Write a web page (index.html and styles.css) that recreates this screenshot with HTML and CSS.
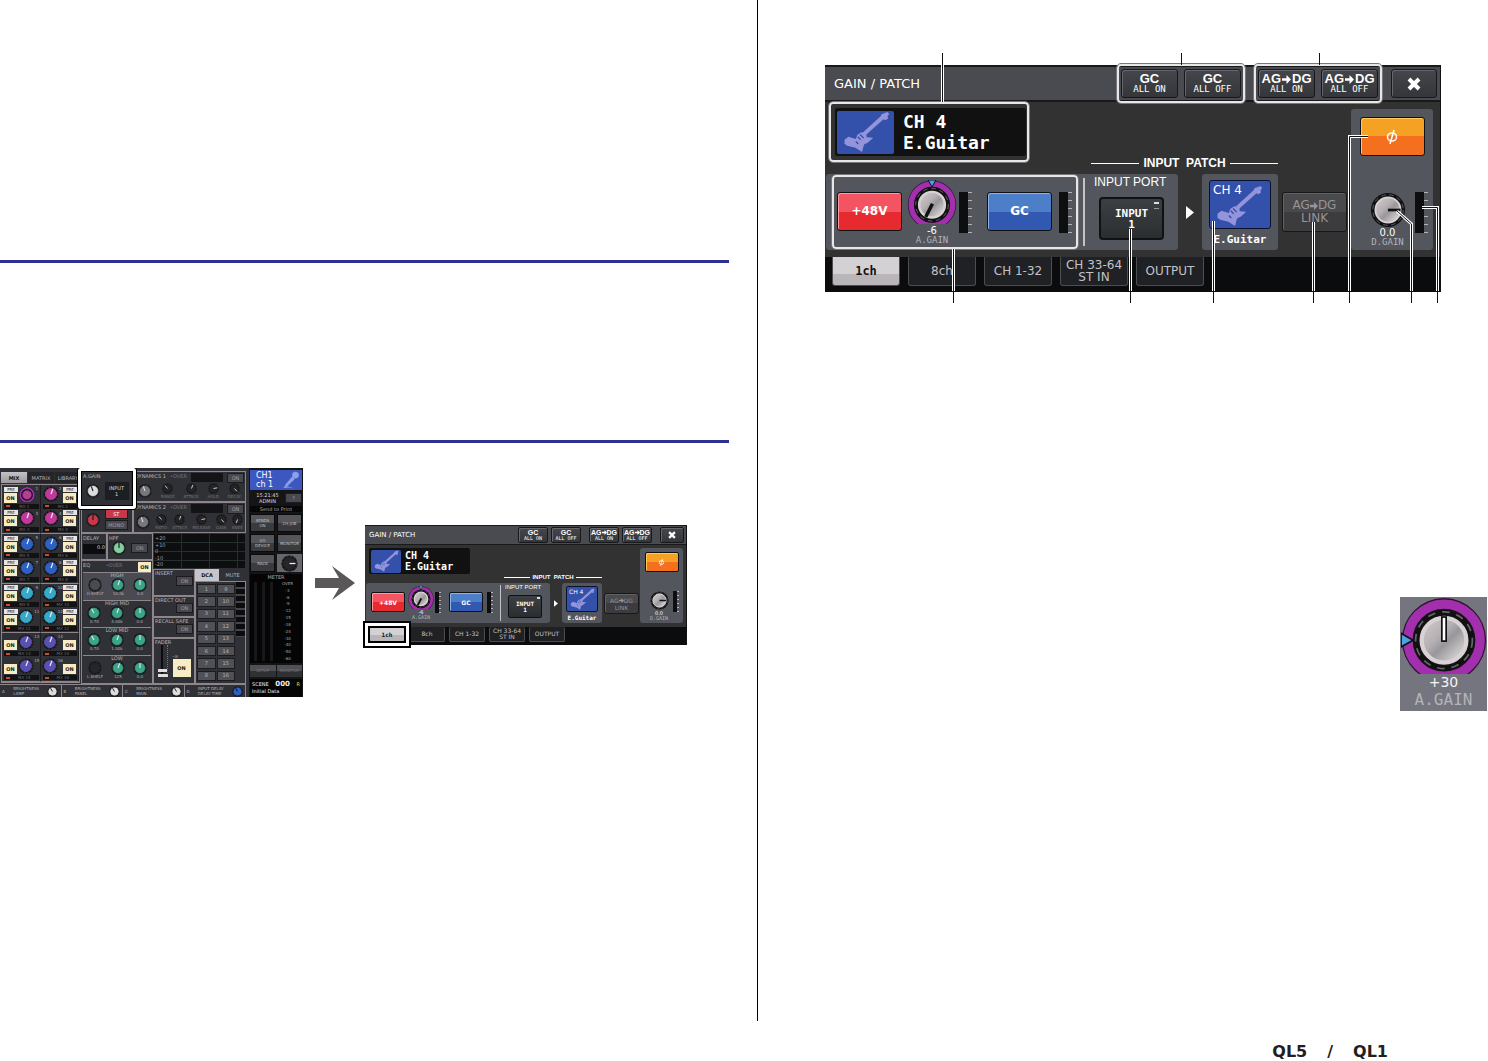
FILE: index.html
```html
<!DOCTYPE html>
<html lang="en">
<head>
  <meta charset="UTF-8">
  <meta name="viewport" content="width=device-width, initial-scale=1">
  <title>QL5/QL1 - GAIN / PATCH</title>
  <link rel="stylesheet" href="styles.css">
</head>
<body>
  <!-- shared shapes -->
  <svg class="defs" aria-hidden="true">
    <defs>
      <linearGradient id="face" x1="0" y1="0" x2="1" y2="1">
        <stop offset="0" stop-color="#d6ced1"/>
        <stop offset="0.4" stop-color="#b5afb2"/>
        <stop offset="0.55" stop-color="#98969a"/>
        <stop offset="1" stop-color="#f2eef0"/>
      </linearGradient>
      <symbol id="guitar" viewBox="0 0 171 130">
        <path d="M134 10 152 3l5 6-5 8 2 6-9 5-5-3-56 50-9-8 57-52z"/>
        <path d="M22 87l12-9 22 7 5-13 12-8 15 4 1 11 20 2-16 14-12 6-6 23-20-13-25-6-8-6z"/>
        <path class="pickup" d="M62 78l9 9M69 71l11 11M56 92l8 8" />
      </symbol>
      <symbol id="mic" viewBox="0 0 40 40">
        <circle cx="30" cy="9" r="7"/>
        <path d="M23 13l5 5L11 34l-4-3zM7 33l-3 4 12-1 8 2" />
      </symbol>
    </defs>
  </svg>

  <div class="spread">
    <section class="page page-left">
      <hr class="rule rule-first">
      <hr class="rule rule-second">
      <div class="figures">
        <div class="mixer" id="mixer"></div>
        <svg class="arrow" viewBox="0 0 40 34" aria-hidden="true"><path d="M0 12h24L17 0l23 17-23 17 7-12H0z"/></svg>
        <div class="panel mini" data-panel></div>
      </div>
    </section>

    <section class="page page-right">
      <div class="figure-main">
        <div class="panel" data-panel></div>
        <!-- leader lines over the panel -->
        <svg class="callouts" viewBox="0 0 616 250" aria-hidden="true">
          <g class="halo">
            <path d="M117.500 12v37M128.500 196v42M305.500 176v62M388.500 168v70M488.500 169v69M543 83.500h-18.500V238M572 158l14.500 13v67M597 154.500h15.500V238"/>
          </g>
          <g class="line">
            <path d="M117.500 0v49M356.500 0v12M494.500 0v12M128.500 196v54M305.500 176v74M388.500 168v82M488.500 169v81M543 83.500h-18.500V250M572 158l14.500 13v79M597 154.500h15.500V250"/>
          </g>
        </svg>
      </div>
      <div class="gain-detail" id="gainDetail"></div>
    </section>
  </div>

  <footer class="footer">
    <div class="model"><span>QL5</span><span>/</span><span>QL1</span></div>
  </footer>

  <script src="script.js"></script>
</body>
</html>
```

FILE: styles.css
```css
* { margin: 0; padding: 0; box-sizing: border-box; }
body {
  min-height: 100vh;
  display: flex;
  flex-direction: column;
  background: #fff;
  font-family: "DejaVu Sans", sans-serif;
  overflow-x: hidden;
}
button { font: inherit; color: inherit; border: none; cursor: pointer; }
svg { display: block; }
.defs { position: absolute; width: 0; height: 0; }

/* two pages side by side */
.spread {
  flex: 1;
  display: grid;
  grid-template-columns: 757fr 731fr;
}
.page-right { border-left: 1px solid #000; }
.rule {
  height: 3px;
  border: none;
  background: #2e3192;
  margin-right: 28px;
}
.rule-first { margin-top: 260px; }
.rule-second { margin-top: 177px; }
.figures {
  display: flex;
  align-items: center;
  margin-top: 25px;
}
.arrow { width: 40px; height: 34px; margin: 0 10px 0 12px; fill: #595757; flex: none; }
.footer {
  height: 40px;
  display: flex;
  justify-content: flex-end;
  align-items: flex-end;
  padding-right: 100px;
}
.model {
  display: flex;
  gap: 20px;
  font-size: 16px;
  line-height: 19px;
  font-weight: bold;
  color: #231f20;
}

/* GAIN / PATCH panel */
.figure-main {
  position: relative;
  width: 616px;
  margin: 53px 0 0 67px;
  padding: 12px 0 11px;
}
.callouts { position: absolute; inset: 0; width: 616px; height: 250px; fill: none; pointer-events: none; }
.halo { stroke: #fff; stroke-width: 3; }
.line { stroke: #111; stroke-width: 1; }
.panel {
  background: #323233;
  color: #fff;
  font-size: 12px;
  line-height: 13px;
  border-right: 1px solid #111;
}
.panel-head {
  height: 37px;
  display: flex;
  align-items: center;
  padding: 0 3px 0 9px;
  background: #4a4b50;
  border-top: 2px solid #18191b;
  border-bottom: 2px solid #18191b;
}
.panel-head h2 { font-size: 13px; font-weight: normal; flex: 1; }
.pair {
  display: flex;
  gap: 6px;
  padding: 3px 2px;
  margin-right: 9px;
}
.framed { border: 2px solid #e8e6e6; outline: 1px solid #77777b; border-radius: 4px; }
.key {
  width: 57px;
  height: 29px;
  display: flex;
  flex-direction: column;
  align-items: center;
  justify-content: center;
  border: 1px solid #17181a;
  border-radius: 3px;
  background: linear-gradient(#45464b, #35363a);
  box-shadow: inset 1px 1px 0 #66676c;
}
.key b {
  display: flex;
  align-items: center;
  gap: 1px;
  font: bold 13px/12px "Liberation Sans", sans-serif;
}
.key small { font: 9px/9px "DejaVu Sans Mono", monospace; }
.key .to { width: 9px; height: 9px; fill: currentColor; }
.key.close { width: 46px; }
.close svg { width: 14px; height: 14px; stroke: #fff; stroke-width: 4; }

.panel-body {
  display: flex;
  padding: 0 7px 7px 1px;
}
.channel-area { flex: 1; }
.name-row {
  height: 72px;
  display: flex;
  align-items: flex-start;
  justify-content: space-between;
  padding: 0 73px 0 3px;
}
.name-frame { padding: 4px 1px 4px 4px; }
.name-box {
  width: 191px;
  height: 48px;
  display: flex;
  align-items: center;
  gap: 9px;
  padding: 0 2px;
  background: #111;
  border-radius: 2px;
  font: bold 18px/21px "DejaVu Sans Mono", monospace;
}
.icon-box { width: 57px; height: 43px; background: #3350ab; border-radius: 2px; }
.icon-box svg { width: 57px; height: 43px; }
.guitar { fill: #9494dc; }
.pickup { stroke: #3350ab; stroke-width: 4; fill: none; }
.patch-title {
  width: 187px;
  align-self: flex-end;
  display: flex;
  align-items: center;
  gap: 4px;
  margin-bottom: 4px;
  font: bold 12px/13px "Liberation Sans", sans-serif;
  white-space: pre;
}
.patch-title::before, .patch-title::after { content: ""; flex: 1; height: 1px; background: #fff; }

.strip-row { height: 76px; display: flex; align-items: flex-start; }
.strip {
  width: 352px;
  height: 76px;
  display: flex;
  align-items: center;
  padding-left: 6px;
  background: #53565d;
  border-radius: 3px;
}
.gain-group {
  width: 246px;
  height: 74px;
  display: flex;
  align-items: flex-start;
  padding: 15px 0 0 3px;
}
.big-key {
  width: 65px;
  height: 39px;
  flex: none;
  border: 1px solid #101114;
  border-radius: 3px;
  color: #fff;
  font-weight: bold;
}
.red { background: linear-gradient(#f25561 50%, #e62a30 50%); box-shadow: inset 1px 1px 0 #ff9aa0; }
.blue { background: linear-gradient(#4c7fc8 50%, #3159b2 50%); box-shadow: inset 1px 1px 0 #8fb2e4; }
.orange { background: linear-gradient(#f5a124 50%, #f4701f 50%); box-shadow: inset 1px 1px 0 #ffc95c; }
.phi svg { width: 14px; height: 18px; margin: 0 auto; stroke: #fff; fill: none; }
.knob {
  position: relative;
  display: flex;
  flex-direction: column;
  align-items: center;
  flex: none;
  font: 10px/10px "DejaVu Sans", sans-serif;
}
.knob input { position: absolute; inset: 0; width: 100%; height: 100%; opacity: 0; }
.knob small { font: 9px/9px "DejaVu Sans Mono", monospace; color: #b4b2b7; }
.gain-group .knob { width: 50px; margin: -12px 2px 0 5px; }
.gain-group .knob > svg { width: 50px; height: 44px; }
.gain-group .knob output { margin-top: 2px; }
.meter {
  width: 13px;
  height: 41px;
  flex: none;
  border-left: 9px solid #0d0e0f;
  background: repeating-linear-gradient(#b4b2b7 0 1px, transparent 1px 8px);
}
.gain-group .meter { margin-right: 15px; }
.gain-group .meter:last-child { margin: 0 0 0 7px; }
.divider { width: 2px; height: 68px; background: #c4c2c6; margin: 0 9px 0 5px; }
.port { font: 12px/13px "Liberation Sans", sans-serif; align-self: flex-start; padding-top: 2px; }
.port-key {
  position: relative;
  display: block;
  width: 65px;
  height: 43px;
  margin: 8px 0 0 5px;
  border: 2px solid #101112;
  border-radius: 4px;
  background: linear-gradient(#3b4043, #2b2e30);
  font: bold 11px/11px "DejaVu Sans Mono", monospace;
}
.port-key::after {
  content: "";
  position: absolute;
  top: 3px;
  right: 3px;
  width: 5px;
  height: 4px;
  border-top: 2px solid #ddd;
  border-bottom: 1px solid #999;
}
.next { width: 8px; height: 13px; margin: 32px 8px 0; fill: #fff; }
.channel-box {
  width: 76px;
  height: 76px;
  display: flex;
  flex-direction: column;
  align-items: center;
  gap: 5px;
  padding-top: 6px;
  background: #53565d;
  border-radius: 3px;
  font: bold 11px/12px "DejaVu Sans Mono", monospace;
}
.tile {
  width: 62px;
  height: 49px;
  display: grid;
  border: 1px solid #0c1130;
  border-radius: 3px;
  background: #3350ab;
  font: 12px/14px "DejaVu Sans", sans-serif;
  text-align: left;
}
.tile > * { grid-area: 1 / 1; }
.tile span { padding: 2px 3px; }
.tile svg { width: 57px; height: 43px; align-self: end; }
.link-key {
  width: 65px;
  height: 40px;
  margin: 18px 0 0 4px;
  border: 1px solid #17181a;
  border-radius: 3px;
  background: linear-gradient(#4a4a4c 50%, #3c3c3e 50%);
  box-shadow: inset 1px 1px 0 #626264;
  color: #96949a;
  font-size: 12px;
  line-height: 13px;
}
.link-key b { display: flex; align-items: center; justify-content: center; font-weight: normal; }
.link-key .to { width: 8px; height: 8px; fill: currentColor; }

.digital {
  width: 82px;
  height: 141px;
  margin-top: 7px;
  display: flex;
  flex-direction: column;
  justify-content: space-between;
  align-items: center;
  padding: 8px 4px 3px;
  background: #53565d;
  border-radius: 3px;
}
.digital-gain { display: flex; align-items: flex-start; gap: 8px; padding-left: 12px; }
.digital .knob { width: 38px; }
.digital .knob > svg { width: 36px; height: 36px; }

.tabs {
  height: 35px;
  display: flex;
  gap: 8px;
  padding-left: 7px;
  background: #0b0c0d;
}
.tab {
  width: 68px;
  height: 29px;
  border: 1px solid #4c4d50;
  border-top: none;
  border-radius: 0 0 3px 3px;
  background: #202124;
  color: #c4c2c6;
  line-height: 12px;
}
.tab.active { background: linear-gradient(#d3d1d3 60%, #b9b5b9 60%); color: #111; font: bold 12px/13px "DejaVu Sans Mono", monospace; }

/* half size version of the panel */
.mini { width: 322px; margin-top: 5px; font-size: 6px; line-height: 7px; flex: none; }
.mini .panel-head { height: 20px; padding: 0 2px 0 4px; border-width: 1px; }
.mini h2 { font-size: 7px; }
.mini .framed { border: none; outline: none; }
.mini .pair { gap: 3px; padding: 0; margin-right: 8px; }
.mini .key { width: 30px; height: 16px; border-radius: 2px; }
.mini .key.close { width: 24px; }
.mini .key b { font-size: 7px; line-height: 7px; gap: 0; }
.mini .key small { font-size: 5px; line-height: 5px; }
.mini .key .to { width: 5px; height: 5px; }
.mini .close svg { width: 8px; height: 8px; }
.mini .panel-body { padding: 0 3px 4px 1px; }
.mini .name-row { height: 38px; padding: 3px 38px 0 3px; }
.mini .name-frame { padding: 0; }
.mini .name-box { width: 101px; height: 26px; gap: 4px; padding: 0 2px; font-size: 10px; line-height: 11px; }
.mini .icon-box, .mini .icon-box svg { width: 30px; height: 23px; }
.mini .patch-title { width: 98px; gap: 2px; font-size: 6px; line-height: 7px; margin-bottom: 2px; }
.mini .strip-row, .mini .strip { height: 40px; }
.mini .strip { width: 184px; padding-left: 3px; }
.mini .gain-group { width: 129px; height: 38px; padding: 8px 0 0 2px; }
.mini .big-key { width: 34px; height: 20px; border-radius: 2px; font-size: 6px; line-height: 7px; }
.mini .phi svg { width: 7px; height: 9px; }
.mini .knob { font-size: 5px; line-height: 5px; }
.mini .knob small { font-size: 5px; line-height: 5px; }
.mini .gain-group .knob { width: 26px; margin: -6px 1px 0 3px; }
.mini .gain-group .knob > svg { width: 26px; height: 23px; }
.mini .gain-group .knob output { margin-top: 1px; }
.mini .meter { width: 6px; height: 21px; border-left-width: 4px; background: repeating-linear-gradient(#b4b2b7 0 1px, transparent 1px 4px); }
.mini .gain-group .meter { margin-right: 8px; }
.mini .gain-group .meter:last-child { margin: 0 0 0 4px; }
.mini .divider { width: 1px; height: 36px; margin: 0 4px 0 2px; }
.mini .port { font-size: 6px; line-height: 7px; padding-top: 1px; }
.mini .port-key { width: 34px; height: 23px; margin: 4px 0 0 3px; border-width: 1px; border-radius: 2px; font-size: 6px; line-height: 6px; }
.mini .port-key::after { top: 1px; right: 1px; width: 3px; height: 2px; border-bottom: none; }
.mini .next { width: 4px; height: 7px; margin: 17px 4px 0; }
.mini .channel-box { width: 40px; height: 40px; gap: 2px; padding-top: 3px; font-size: 6px; line-height: 7px; }
.mini .tile { width: 32px; height: 26px; border-radius: 2px; font-size: 6px; line-height: 7px; }
.mini .tile span { padding: 1px 2px; }
.mini .tile svg { width: 30px; height: 23px; }
.mini .link-key { width: 35px; height: 21px; margin: 10px 0 0 2px; font-size: 6px; line-height: 7px; }
.mini .link-key .to { width: 5px; height: 5px; }
.mini .digital { width: 43px; height: 75px; margin-top: 3px; padding: 4px 2px 2px; }
.mini .digital-gain { gap: 4px; padding-left: 5px; }
.mini .digital .knob { width: 20px; }
.mini .digital .knob > svg { width: 19px; height: 19px; }
.mini .digital .knob output { margin-top: 1px; }
.mini .tabs { height: 18px; gap: 4px; padding-left: 4px; }
.mini .tab { width: 36px; height: 15px; border-radius: 2px; font-size: 6px; line-height: 6px; }
.mini .tab.active { position: relative; font-size: 6px; line-height: 7px; }
.mini .tab.active::after {
  content: "";
  position: absolute;
  inset: -4px -5px -5px;
  border: 3px solid #fff;
  outline: 2px solid #000;
  box-shadow: inset 0 0 0 2px #000;
}

/* enlarged A.GAIN knob */
.gain-detail {
  width: 87px;
  height: 114px;
  margin: 294px 1px 0 auto;
  background: #74757e;
}
.gain-detail .knob { color: #f4f4f4; font-size: 14px; line-height: 16px; }
.gain-detail .knob > svg { width: 86px; height: 77px; }
.gain-detail .knob small { font-size: 16px; line-height: 19px; color: #b4b4b8; }

/* channel overview screen */
.mixer {
  width: 303px;
  height: 229px;
  display: flex;
  flex: none;
  overflow: hidden;
  background: #303136;
  color: #b9b4b8;
  font-size: 5px;
  line-height: 6px;
}
.mixer .main { width: 246px; flex: none; display: flex; flex-direction: column; }
.mixer .work { height: 216px; display: grid; grid-template-columns: 81px minmax(0, 1fr); grid-template-rows: minmax(0, 1fr); }
.sends { display: flex; flex-direction: column; min-height: 0; }
.send-tabs { height: 16px; display: flex; gap: 1px; padding: 4px 0 1px 1px; }
.send-tabs button { flex: 1; background: #252529; }
.send-tabs .on { background: linear-gradient(#c5c2c6, #9b989e); color: #111; font-weight: bold; }
.send-grid {
  flex: 1;
  min-height: 0;
  display: grid;
  grid-template-columns: repeat(2, minmax(0, 1fr));
  grid-template-rows: repeat(8, minmax(0, 1fr));
  margin: 0 1px 1px;
  border: 1px solid #8d8589;
}
.send {
  display: grid;
  grid-template-columns: 14px minmax(0, 1fr);
  grid-template-rows: minmax(0, 1fr) 5px;
  gap: 1px;
  padding: 1px 1px 1px 2px;
  border-right: 1px solid #1c1c1e;
}
.send.last-of-pair { border-bottom: 1px solid #8d8589; }
.send.right { grid-template-columns: minmax(0, 1fr) 14px; }
.send.right .send-keys { order: 2; }
.send.right .send-name { order: 3; }
.send-keys { display: flex; flex-direction: column; justify-content: flex-end; gap: 1px; }
.pre { height: 5px; background: #e8e4e4; color: #222; font-size: 4px; line-height: 5px; text-align: center; }
.on-key { width: 13px; height: 10px; background: #f8ecc5; color: #221; font-weight: bold; font-size: 5px; line-height: 10px; }
.send-knob { display: flex; align-items: center; justify-content: center; }
.send-knob svg { width: 16px; height: 16px; flex: none; }
.send-knob span { align-self: flex-start; font-size: 4px; line-height: 5px; }
.send-name {
  grid-column: 1 / -1;
  display: flex;
  align-items: center;
  justify-content: center;
  background: #121214;
  color: #6b6669;
  font-size: 4px;
  line-height: 5px;
}
.send-name::before { content: ""; width: 4px; height: 2px; margin: 0 auto 0 2px; background: #d24a25; }
.send-name span { margin-right: auto; }
.process { display: flex; flex-direction: column; min-height: 0; }
.row { display: flex; }
.cell { flex: 1; padding: 1px; border: 1px solid #8d8589; min-width: 0; }
.cell .row { align-items: center; justify-content: space-around; }
.cell svg { width: 14px; height: 14px; }
.dim { color: #77747a; }
.dark-key { background: #48494e; border: 1px solid #1c1c1e; color: #a09ca0; min-width: 17px; height: 10px; line-height: 8px; }
.head-col { width: 52px; display: flex; flex-direction: column; flex: none; }
.again { position: relative; height: 35px; margin-top: 3px; flex: none; z-index: 1; background: #303136; }
.again::after {
  content: "";
  position: absolute;
  inset: -4px;
  border: 3px solid #fff;
  border-radius: 2px;
  outline: 1px solid #000;
  box-shadow: inset 0 0 0 1px #000;
}
.again .dark-key { width: 24px; height: 18px; color: #ddd; background: #1c1f22; line-height: 6px; }
.again .row { margin-top: 3px; }
.stereo { padding: 2px; }
.stereo-keys { display: flex; flex-direction: column; gap: 1px; }
.stereo-keys .dark-key { width: 23px; }
.stereo-keys .st { background: #c8384a; color: #fff; }
.dyn-col { flex: 1; display: flex; flex-direction: column; padding-top: 3px; min-width: 0; }
.dyn { height: 31px; flex: none; }
.dyn-title { display: flex; justify-content: space-between; gap: 4px; }
.dyn-title i { flex: 1; max-width: 38px; height: 9px; background: #141416; }
.dyn .row { gap: 3px; }
.dyn .knob-mini { display: flex; flex-direction: column; align-items: center; color: #77747a; font-size: 4px; line-height: 5px; }
.dyn svg { width: 11px; height: 11px; }
.dyn .threshold svg { width: 14px; height: 14px; }
.low { flex: 1; min-height: 0; }
.eq-col { width: 72px; display: flex; flex-direction: column; flex: none; min-height: 0; }
.delay-row { height: 27px; flex: none; }
.delay { max-width: 26px; }
.delay p { margin-top: 3px; height: 10px; background: #0c0c0e; text-align: right; color: #ddd; }
.eq { display: flex; flex-direction: column; min-height: 0; }
.eq header { display: flex; justify-content: space-between; }
.band { flex: 1; border-top: 1px solid #8d8589; text-align: center; }
.band.on { background: #4a4b52; }
.band h3 { font-size: 5px; line-height: 5px; font-weight: normal; }
.band .row { font-size: 4px; line-height: 4px; align-items: flex-start; }
.band .row svg { margin: 0 auto; }
.out-col { flex: 1; display: flex; flex-direction: column; min-width: 0; }
.graph {
  height: 34px;
  flex: none;
  display: flex;
  flex-direction: column;
  justify-content: space-between;
  margin: 1px;
  padding: 1px;
  background: repeating-linear-gradient(90deg, transparent 0 27px, #27302f 27px 28px), repeating-linear-gradient(#0c0e0f 0 8px, #27302f 8px 9px);
  color: #a09ca0;
}
.outs { width: 42px; display: flex; flex-direction: column; flex: none; }
.outs .cell { flex: none; height: 21px; padding: 0 1px; }
.outs .cell.insert { height: 27px; }
.outs .cell.fader { flex: 1; }
.outs .dark-key { display: block; margin-left: auto; }
.fader .row { align-items: flex-end; }
.fader .track { width: 10px; height: 32px; border-right: 1px dotted #77747a; background: linear-gradient(90deg, transparent 3px, #0c0c0e 3px 5px, transparent 5px); border-bottom: 8px double #e0dee0; }
.fader .on-key { width: 18px; height: 18px; line-height: 18px; }
.dca { flex: 1; display: flex; flex-direction: column; min-height: 0; }
.dca header { height: 12px; display: flex; line-height: 12px; text-align: center; }
.dca header b { width: 24px; background: #c8c5c9; color: #111; }
.dca header span { flex: 1; }
.dca-body { flex: 1; display: flex; border: 1px solid #8d8589; min-height: 0; }
.dca-grid { flex: 1; display: grid; grid-template-columns: 1fr 1fr; gap: 2px 1px; padding: 2px 1px; }
.dca-grid button { background: #505157; border: 1px solid #1c1c1e; color: #b9b4b8; line-height: 5px; }
.lamps { width: 9px; height: 55px; flex: none; background: repeating-linear-gradient(#0c0c0e 0 5px, #45464b 5px 7px); }
.bottom { height: 13px; display: grid; grid-template-columns: repeat(4, minmax(0, 1fr)); border-top: 1px solid #8d8589; font-size: 4px; line-height: 5px; }
.bottom div { display: flex; align-items: center; justify-content: space-between; padding: 0 2px; border-right: 1px solid #8d8589; }
.bottom svg { width: 11px; height: 11px; }
.mixer .side {
  width: 54px;
  display: flex;
  flex-direction: column;
  gap: 2px;
  padding: 2px 1px 0;
  margin-left: 3px;
  background: #151517;
}
.selected { height: 20px; display: flex; justify-content: space-between; padding: 1px 2px 0 6px; background: #3c57c0; color: #fff; font-size: 8px; line-height: 9px; }
.selected svg { width: 18px; height: 18px; fill: #8fa0e8; stroke: #8fa0e8; }
.clock { height: 12px; text-align: center; color: #ddd; align-items: center; }
.clock p { flex: 1; }
.print { background: #060607; text-align: center; color: #aaa; }
.side-keys { display: grid; grid-template-columns: 1fr 1fr; gap: 2px; }
.side-keys button { height: 18px; background: linear-gradient(#55565a 50%, #3a3b3f 50%); border: 1px solid #0a0a0b; color: #c4c0c4; font-size: 4px; line-height: 5px; overflow: hidden; }
.side-keys .dial { display: grid; place-items: center; background: #66676c; }
.side-keys .dial svg { width: 17px; height: 17px; }
.meters { flex: 1; display: flex; flex-direction: column; background: #050506; text-align: center; color: #aaa; }
.bars { flex: 1; display: flex; gap: 5px; padding: 2px 4px; font-size: 4px; line-height: 4px; }
.bars i { width: 3px; background: #18181b; }
.bars ol { list-style: none; display: flex; flex-direction: column; justify-content: space-between; margin-left: 4px; }
.user-keys { display: flex; gap: 1px; }
.user-keys button { flex: 1; height: 12px; background: linear-gradient(#505155 50%, #303135 50%); color: #77747a; font-size: 4px; }
.scene { height: 18px; padding: 1px 2px; background: #050506; color: #eee; }
.scene p { display: flex; justify-content: space-between; align-items: baseline; line-height: 8px; }
.scene p b { font-size: 7px; }
.scene em { color: #e8e036; font-style: normal; }
```

FILE: script.js
```js
const toArrow = '<svg class="to" viewBox="0 0 10 10"><path d="M0 3.500h5V0l5 5-5 5V6.500H0z"/></svg>';
const guitar = '<svg class="guitar" aria-hidden="true"><use href="#guitar"/></svg>';

// knob with the purple range ring; pointer and marker in degrees from the top
function ringKnob(pointer, marker, color) {
  return `<svg viewBox="0 0 100 89" aria-hidden="true">
    <circle cx="50" cy="50" r="49" fill="#2b1630"/>
    <circle cx="50" cy="50" r="42" fill="none" stroke="#a32fae" stroke-width="11"/>
    <path d="M42 0h16l-8 14z" fill="#4aa3df" stroke="#111" stroke-width="2" transform="rotate(${marker} 50 50)"/>
    <circle cx="50" cy="50" r="36" fill="#111"/>
    <circle cx="50" cy="50" r="33" fill="none" stroke="#66666a" stroke-width="2" stroke-dasharray="9 8"/>
    <circle cx="50" cy="50" r="26" fill="url(#face)" stroke="#d8d2d4" stroke-width="5"/>
    <path d="M50 52V22" stroke="#111" stroke-width="7" transform="rotate(${pointer} 50 50)"/>
    <path d="M50 50V24" stroke="${color}" stroke-width="3" transform="rotate(${pointer} 50 50)"/>
  </svg>`;
}

function plainKnob(pointer, fill = 'url(#face)', line = '#111') {
  return `<svg viewBox="0 0 40 40" aria-hidden="true">
    <circle cx="20" cy="20" r="19" fill="#111"/>
    <circle cx="20" cy="20" r="17" fill="none" stroke="#66666a" stroke-width="1" stroke-dasharray="5 4"/>
    <circle cx="20" cy="20" r="14" fill="${fill}" stroke="${fill === 'url(#face)' ? '#d8d2d4' : fill}" stroke-width="2"/>
    <path d="M20 20V6" stroke="${line}" stroke-width="3" transform="rotate(${pointer} 20 20)"/>
  </svg>`;
}

function knob(svg, value, name, min, max) {
  return `<label class="knob"><input type="range" min="${min}" max="${max}" value="${value}" aria-label="${name}">
    ${svg}<output>${value}</output><small>${name}</small></label>`;
}

function panel() {
  const gc = t => `<button class="key"><b>GC</b><small>${t}</small></button>`;
  const ag = t => `<button class="key"><b>AG${toArrow}DG</b><small>${t}</small></button>`;
  return `
    <header class="panel-head">
      <h2>GAIN / PATCH</h2>
      <div class="pair framed">${gc('ALL ON')}${gc('ALL OFF')}</div>
      <div class="pair framed">${ag('ALL ON')}${ag('ALL OFF')}</div>
      <button class="key close" aria-label="Close"><svg viewBox="0 0 14 14"><path d="M2 2l10 10M12 2L2 12"/></svg></button>
    </header>
    <div class="panel-body">
      <div class="channel-area">
        <div class="name-row">
          <div class="name-frame framed">
            <div class="name-box"><div class="icon-box">${guitar}</div><p>CH 4<br>E.Guitar</p></div>
          </div>
          <h3 class="patch-title">INPUT&nbsp; PATCH</h3>
        </div>
        <div class="strip-row">
          <div class="strip">
            <div class="gain-group framed">
              <button class="big-key red">+48V</button>
              ${knob(ringKnob(207, 0, '#111'), '-6', 'A.GAIN', -6, 66)}
              <div class="meter"></div>
              <button class="big-key blue">GC</button>
              <div class="meter"></div>
            </div>
            <div class="divider"></div>
            <div class="port">INPUT PORT<button class="port-key">INPUT<br>1</button></div>
          </div>
          <svg class="next" viewBox="0 0 8 13"><path d="M0 0l8 6.500L0 13z"/></svg>
          <div class="channel-box">
            <button class="tile">${guitar}<span>CH 4</span></button>
            <p>E.Guitar</p>
          </div>
          <button class="link-key"><b>AG${toArrow}DG</b>LINK</button>
        </div>
      </div>
      <div class="digital">
        <button class="big-key orange phi" aria-label="Phase">
          <svg viewBox="0 0 14 18"><ellipse cx="7" cy="9" rx="4.500" ry="4" stroke-width="1.500"/><path d="M9 2L5 16" stroke-width="1.500"/></svg>
        </button>
        <div class="digital-gain">
          ${knob(plainKnob(90), '0.0', 'D.GAIN', -96, 24)}
          <div class="meter"></div>
        </div>
      </div>
    </div>
    <nav class="tabs">
      <button class="tab active">1ch</button>
      <button class="tab">8ch</button>
      <button class="tab">CH 1-32</button>
      <button class="tab">CH 33-64<br>ST IN</button>
      <button class="tab">OUTPUT</button>
    </nav>`;
}

// channel overview
const sendColors = ['#c03a9c', '#c03a9c', '#2d62c4', '#2d62c4', '#35a9c9', '#35a9c9', '#5a50b4', '#5a50b4'];
const green = '#3aa589';

function sends() {
  let html = '';
  for (let i = 0; i < 16; i++) {
    const row = Math.floor(i / 2);
    const cls = (i % 2 ? ' right' : '') + (row % 2 ? ' last-of-pair' : '');
    html += `<div class="send${cls}">
      <div class="send-keys">${row < 6 ? '<div class="pre">PRE</div>' : ''}<button class="on-key">ON</button></div>
      <div class="send-knob">${i ? plainKnob(20, sendColors[row], '#eee') : ringKnob(20, 0, '#eee').replace('url(#face)', '#c03a9c').replace('#d8d2d4', '#c03a9c')}<span>${i + 1}</span></div>
      <div class="send-name"><span>MX ${i + 1}</span></div>
    </div>`;
  }
  return html;
}

function dyn(n, names) {
  const minis = names.map((t, i) =>
    `<div class="knob-mini">${plainKnob(i * 60 - 40, '#242428', '#ddd')}${t}</div>`).join('');
  return `<div class="cell dyn">
    <div class="dyn-title"><span>DYNAMICS ${n}</span><span class="dim">•OVER</span><i></i><button class="dark-key">ON</button></div>
    <div class="row"><div class="knob-mini threshold">${plainKnob(-20, '#77777c', '#ddd')}</div>${minis}</div>
  </div>`;
}

function band(name, freq, on) {
  return `<div class="band${on ? ' on' : ''}"><h3>${name}</h3>
    <div class="row"><div>${name === 'LOW' ? plainKnob(0, '#26262a', '#26262a') + 'L.SHELF' : on ? plainKnob(0, '#4a4b52', '#4a4b52') + 'H.SHELF' : plainKnob(-30, green, '#eee') + '0.70'}</div>
    <div>${plainKnob(20, green, '#eee')}${freq}</div><div>${plainKnob(0, green, '#eee')}0.0</div></div></div>`;
}

function mixer() {
  const dca = [1, 2, 3, 4, 5, 6, 7, 8].map(n => `<button>${n}</button><button>${n + 8}</button>`).join('');
  const bottom = ['BRIGHTNESS<br>LAMP', 'BRIGHTNESS<br>PANEL', 'BRIGHTNESS<br>MAIN', 'INPUT DELAY<br>DELAY TIME'].map((t, i) =>
    `<div>${'ABCD'[i]}<span>${t}</span>${plainKnob(-30, i < 3 ? '#ddd' : '#2d62c4')}</div>`).join('');
  const scale = ['OVER', '-3', '-6', '-9', '-12', '-15', '-18', '-24', '-30', '-40', '-50', '-60'];
  return `
    <div class="main">
      <div class="work">
        <div class="sends">
          <div class="send-tabs"><button class="on">MIX</button><button>MATRIX</button><button>LIBRARY</button></div>
          <div class="send-grid">${sends()}</div>
        </div>
        <div class="process">
          <div class="row">
            <div class="head-col">
              <div class="cell again">A.GAIN<div class="row">${plainKnob(-20, '#ddd')}<button class="dark-key">INPUT<br>1</button></div></div>
              <div class="cell stereo"><div class="row">${plainKnob(0, '#c8384a')}<div class="stereo-keys"><button class="dark-key st">ST</button><button class="dark-key">MONO</button></div></div></div>
            </div>
            <div class="dyn-col">
              ${dyn(1, ['RANGE', 'ATTACK', 'HOLD', 'DECAY'])}
              ${dyn(2, ['RATIO', 'ATTACK', 'RELEASE', 'GAIN', 'KNEE'])}
            </div>
          </div>
          <div class="row low">
            <div class="eq-col">
              <div class="row delay-row">
                <div class="cell delay">DELAY<p>0.0</p></div>
                <div class="cell">HPF<div class="row">${plainKnob(0, '#83cf9f')}<button class="dark-key">ON</button></div></div>
              </div>
              <div class="cell eq">
                <header>EQ<span class="dim">•OVER</span><button class="on-key">ON</button></header>
                ${band('HIGH', '10.0k', true)}${band('HIGH MID', '4.00k')}${band('LOW MID', '1.00k')}${band('LOW', '125')}
              </div>
            </div>
            <div class="out-col">
              <div class="graph"><span>+20</span><span>+10</span><span>0</span><span>-10</span><span>-20</span></div>
              <div class="row low">
                <div class="outs">
                  <div class="cell insert">INSERT<button class="dark-key">ON</button></div>
                  <div class="cell">DIRECT OUT<button class="dark-key">ON</button></div>
                  <div class="cell">RECALL SAFE<button class="dark-key">ON</button></div>
                  <div class="cell fader">FADER<div class="row"><div class="track"></div><div>-∞<br><button class="on-key">ON</button></div></div></div>
                </div>
                <div class="dca">
                  <header><b>DCA</b><span>MUTE</span></header>
                  <div class="dca-body"><div class="dca-grid">${dca}</div><div class="lamps"></div></div>
                </div>
              </div>
            </div>
          </div>
        </div>
      </div>
      <div class="bottom">${bottom}</div>
    </div>
    <div class="side">
      <div class="selected"><p>CH1<br>ch 1</p><svg><use href="#mic"/></svg></div>
      <div class="row clock"><p>15:21:45<br>ADMIN</p><button class="dark-key">?</button></div>
      <div class="print">Send to Print</div>
      <div class="side-keys">
        <button>SENDS<br>ON</button><button>CH JOB</button>
        <button>I/O<br>DEVICE</button><button>MONITOR</button>
        <button>RACK</button><div class="dial">${plainKnob(90, '#26262a', '#eee')}</div>
      </div>
      <div class="meters">METER<div class="bars"><i></i><i></i><i></i><ol>${scale.map(s => `<li>${s}</li>`).join('')}</ol></div></div>
      <div class="user-keys"><button>SETUP</button><button>MONITOR</button></div>
      <div class="scene"><p>SCENE<b>000</b><em>R</em></p>Initial Data</div>
    </div>`;
}

document.querySelectorAll('[data-panel]').forEach(el => { el.innerHTML = panel(); });
document.getElementById('mixer').innerHTML = mixer();
document.getElementById('gainDetail').innerHTML = knob(ringKnob(0, -90, '#fff'), '+30', 'A.GAIN', -6, 66);
```
